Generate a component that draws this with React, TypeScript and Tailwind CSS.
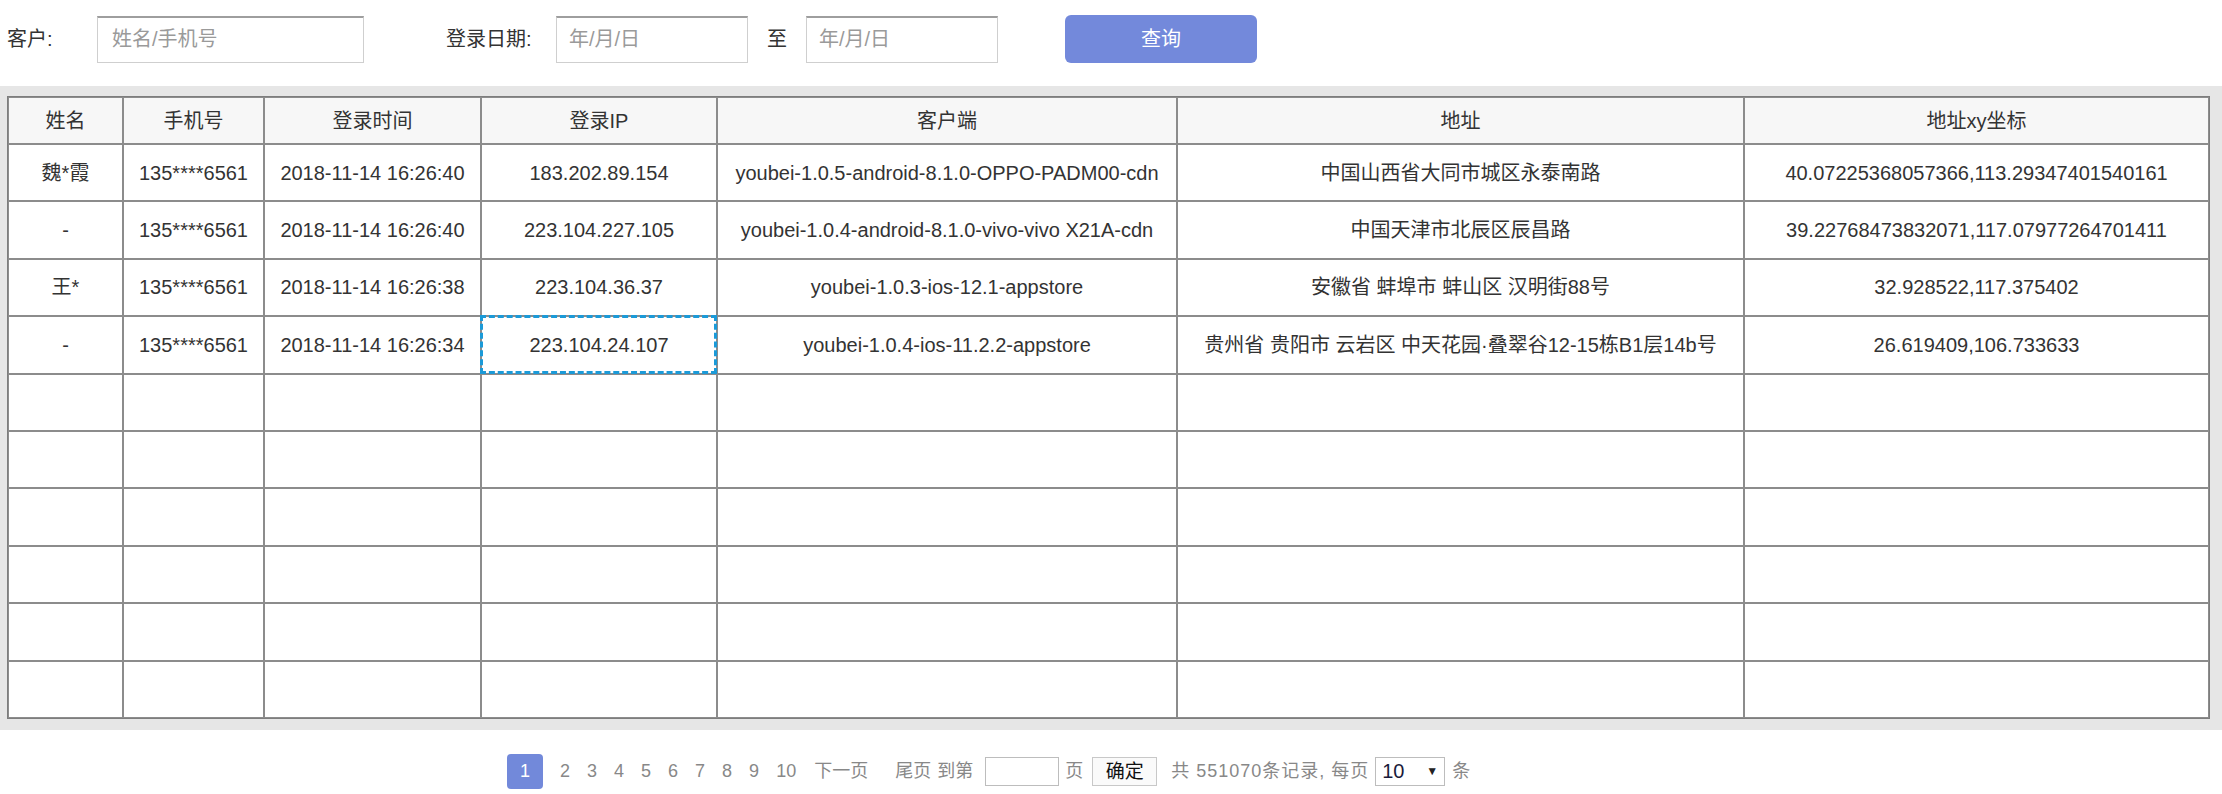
import React from "react";

const rows: string[][] = [
  ["魏*霞", "135****6561", "2018-11-14 16:26:40", "183.202.89.154", "youbei-1.0.5-android-8.1.0-OPPO-PADM00-cdn", "中国山西省大同市城区永泰南路", "40.07225368057366,113.29347401540161"],
  ["-", "135****6561", "2018-11-14 16:26:40", "223.104.227.105", "youbei-1.0.4-android-8.1.0-vivo-vivo X21A-cdn", "中国天津市北辰区辰昌路", "39.22768473832071,117.07977264701411"],
  ["王*", "135****6561", "2018-11-14 16:26:38", "223.104.36.37", "youbei-1.0.3-ios-12.1-appstore", "安徽省 蚌埠市 蚌山区 汉明街88号", "32.928522,117.375402"],
  ["-", "135****6561", "2018-11-14 16:26:34", "223.104.24.107", "youbei-1.0.4-ios-11.2.2-appstore", "贵州省 贵阳市 云岩区 中天花园·叠翠谷12-15栋B1层14b号", "26.619409,106.733633"],
];

const headers = ["姓名", "手机号", "登录时间", "登录IP", "客户端", "地址", "地址xy坐标"];
const widths = [115, 141, 217, 236, 460, 567, 465];

const font = { fontFamily: '"Liberation Sans", "Noto Sans CJK SC", sans-serif' };

function SearchBar() {
  return (
    <div className="flex items-center h-[48px] mt-[15px] mb-[23px] text-[20px] text-[#333]">
      <span className="w-[97px] pl-[7px]">客户:</span>
      <input
        className="w-[267px] h-[47px] px-[14px] border border-[#cfcfcf] border-t-2 border-t-[#9e9e9e] placeholder:text-[#9a9a9a] outline-none"
        placeholder="姓名/手机号"
      />
      <span className="w-[110px] ml-[82px]">登录日期:</span>
      <input
        className="w-[192px] h-[47px] px-[12px] border border-[#cfcfcf] border-t-2 border-t-[#9e9e9e] placeholder:text-[#9a9a9a] outline-none"
        placeholder="年/月/日"
      />
      <span className="w-[58px] pl-[19px]">至</span>
      <input
        className="w-[192px] h-[47px] px-[12px] border border-[#cfcfcf] border-t-2 border-t-[#9e9e9e] placeholder:text-[#9a9a9a] outline-none"
        placeholder="年/月/日"
      />
      <button className="ml-[67px] w-[192px] h-[48px] rounded-[6px] bg-[#7389db] text-white text-[20px]">
        查询
      </button>
    </div>
  );
}

function DataTable() {
  const empty = Array.from({ length: 6 }, () => ["", "", "", "", "", "", ""]);
  const all = [...rows, ...empty];
  return (
    <div className="bg-[#e6e6e6] pl-[7px] pt-[10px] pr-[12px] pb-[11px]">
      <table className="table-fixed w-full border-separate border-spacing-0 border border-[#7d7d7d] text-[20px] text-[#333]">
        <colgroup>
          {widths.map((w, i) => (
            <col key={i} style={{ width: w }} />
          ))}
        </colgroup>
        <thead>
          <tr className="h-[47px] bg-[#f7f7f7]">
            {headers.map((h) => (
              <th key={h} className="font-normal border border-[#8c8c8c] text-center">
                {h}
              </th>
            ))}
          </tr>
        </thead>
        <tbody className="bg-white">
          {all.map((r, ri) => (
            <tr key={ri} className="h-[57.4px]">
              {r.map((c, ci) => (
                <td key={ci} className="relative border border-[#8c8c8c] text-center whitespace-nowrap">
                  {c}
                  {ri === 3 && ci === 3 && (
                    <span className="absolute -top-[2px] -bottom-[1px] -left-[2px] -right-[1px] border-[3px] border-dashed border-[#1b9ad8]" />
                  )}
                </td>
              ))}
            </tr>
          ))}
        </tbody>
      </table>
    </div>
  );
}

function Pager() {
  return (
    <div className="flex items-center mt-[24px] text-[18px] text-[#888]">
      <span className="ml-[507px] w-[36px] h-[35px] rounded-[4px] bg-[#7289da] text-white flex items-center justify-center">
        1
      </span>
      {["2", "3", "4", "5", "6", "7", "8", "9", "10"].map((n) => (
        <span key={n} className="ml-[17px]">
          {n}
        </span>
      ))}
      <span className="ml-[18px]">下一页</span>
      <span className="ml-[27px]">尾页</span>
      <span className="ml-[6px]">到第</span>
      <input className="ml-[12px] w-[74px] h-[29px] border border-[#bdbdbd] outline-none" />
      <span className="ml-[6px]">页</span>
      <button className="ml-[9px] w-[65px] h-[29px] border border-[#c8c8c8] bg-[#fafafa] text-[#111] text-[19px]">
        确定
      </button>
      <span className="ml-[14px] tracking-[1px] whitespace-pre">共 551070条记录, 每页</span>
      <span className="ml-[6px] w-[70px] h-[29px] border border-[#bdbdbd] flex items-center justify-between px-[6px] text-[#1a1a3a] text-[20px]">
        <span>10</span>
        <span className="text-[12px] text-[#222]">▼</span>
      </span>
      <span className="ml-[7px]">条</span>
    </div>
  );
}

export default function App() {
  return (
    <div className="w-[2222px] h-[794px] bg-white overflow-hidden" style={font}>
      <SearchBar />
      <DataTable />
      <Pager />
    </div>
  );
}
